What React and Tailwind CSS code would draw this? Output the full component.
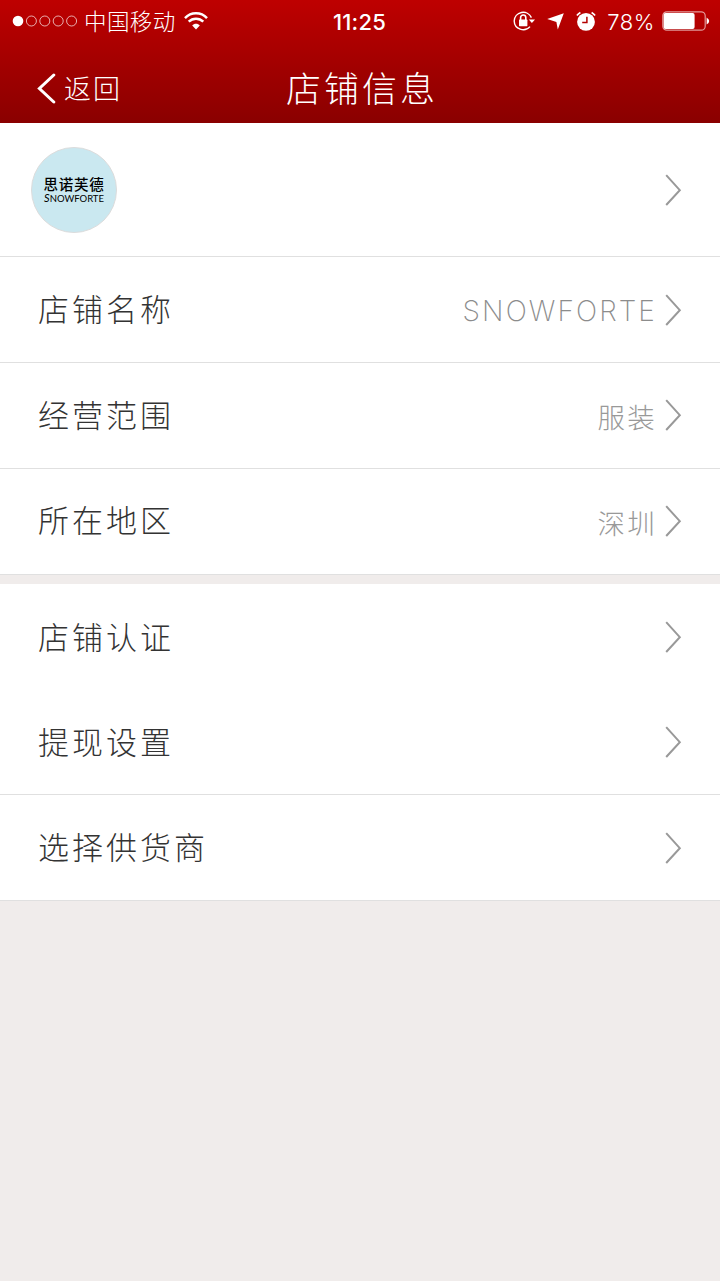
import React from "react";

const cjk = "font-['Noto_Sans_CJK_SC',sans-serif]";

function Chevron() {
  return (
    <svg className="h-[32px] w-[18px] shrink-0" viewBox="0 0 18 32" fill="none" stroke="#999" strokeWidth="2">
      <path d="M1.2 1.2 L14.8 16.2 L1.2 31" />
    </svg>
  );
}

function Row({ label, value, latin, size, labelPad = "pb-[4px]", border }) {
  return (
    <div className={`flex items-center justify-between pr-[37px] pl-[38px] ${size} ${border ? "border-b border-[#e0e0e0]" : ""} bg-white`}>
      <span className={`${labelPad} text-[31px] leading-none font-light tracking-[3px] text-[#333]`}>{label}</span>
      <div className="flex items-center">
        {value && (
          <span
            className={
              latin
                ? "mr-[8px] pt-[3px] font-['Inter','Liberation_Sans',sans-serif] text-[28px] leading-none font-extralight tracking-[2.1px] text-[#8c8c8c]"
                : "mr-[8px] pt-[4px] text-[27.5px] leading-none font-light tracking-[2.2px] text-[#999]"
            }
          >
            {value}
          </span>
        )}
        <Chevron />
      </div>
    </div>
  );
}

function StatusBar() {
  return (
    <div className="grid h-[44px] grid-cols-[1fr_auto_1fr] items-center pr-[10px] pl-[12px]">
      <div className="flex items-center">
        <svg className="mb-[2px] h-[12px] w-[66px]" viewBox="0 0 66 12" fill="none" stroke="#fff" strokeOpacity=".75" strokeWidth="0.9">
          <circle cx="6" cy="6" r="5.3" fill="#fff" stroke="none" />
          <circle cx="19.4" cy="6" r="5" />
          <circle cx="32.8" cy="6" r="5" />
          <circle cx="46.2" cy="6" r="5" />
          <circle cx="59.6" cy="6" r="5" />
        </svg>
        <span className="ml-[6px] pb-[3px] text-[22.5px] leading-none font-light tracking-[0.4px]">中国移动</span>
        <svg className="mb-[3px] ml-[8px] h-[18px] w-[24px]" viewBox="0 0 24 18" fill="none" stroke="#fff" strokeWidth="2.5">
          <path d="M1 6.1 C7 -0.3 17 -0.3 23 6.1" />
          <path d="M4.7 9.7 C8.8 5.6 15.2 5.6 19.3 9.7" />
          <path d="M12 17.6 L8.2 13.5 C10.2 11.3 13.8 11.3 15.8 13.5 Z" fill="#fff" stroke="none" />
        </svg>
      </div>
      <span className="mr-[3px] font-['Inter','Liberation_Sans',sans-serif] text-[22px] leading-none font-medium tracking-[0.2px]">11:25</span>
      <div className="flex items-center justify-end">
        <svg className="mb-[2px] h-[22px] w-[22px]" viewBox="0 0 22 22" fill="none" stroke="#fff" strokeWidth="1.4">
          <path d="M18.4 7.6 A9 9 0 0 0 1.2 11 A9 9 0 0 0 17 16.6" />
          <path d="M15.8 9.5 H22 L18.9 13 Z" fill="#fff" stroke="none" />
          <rect x="6" y="9.6" width="8.4" height="6.6" rx=".6" fill="#fff" stroke="none" />
          <path d="M7.6 10 V7.6 A2.6 2.6 0 0 1 12.8 7.6 V10" strokeWidth="1.6" />
        </svg>
        <svg className="mb-[1px] ml-[12px] h-[17px] w-[17px]" viewBox="0 0 17 17" fill="#fff">
          <path d="M16.8 .3 L10.8 16.6 L9.4 8.9 L.2 6 Z" />
        </svg>
        <svg className="mb-[2px] ml-[12px] h-[20px] w-[20px]" viewBox="0 0 20 20">
          <circle cx="10" cy="10.9" r="8.9" fill="#fff" />
          <path d="M.9 4.4 A11 11 0 0 1 4.4 1.4 M15.6 1.4 A11 11 0 0 1 19.1 4.4" fill="none" stroke="#fff" strokeWidth="1.7" />
          <path d="M10.9 5.8 V11.6 H6.2" fill="none" stroke="#b30000" strokeWidth="1.5" />
        </svg>
        <span className="ml-[11px] font-['Inter','Liberation_Sans',sans-serif] text-[22px] leading-none font-light tracking-[0.6px]">78%</span>
        <svg className="mb-[2px] ml-[7px] h-[20px] w-[48px]" viewBox="0 0 48 20">
          <rect x=".8" y=".8" width="42.4" height="18.4" rx="4" fill="none" stroke="#fff" strokeOpacity=".6" strokeWidth="1.2" />
          <rect x="1.6" y="2" width="31" height="16" rx="2" fill="#fff" />
          <path d="M44.6 6.5 Q47.2 8 47.2 10 T44.6 13.5 Z" fill="#fff" />
        </svg>
      </div>
    </div>
  );
}

export default function App() {
  return (
    <div className={`flex h-[1281px] w-[720px] flex-col bg-[#f0eceb] ${cjk}`}>
      <header className="flex h-[123px] flex-col bg-gradient-to-b from-[#be0000] to-[#8a0000] text-white">
        <StatusBar />
        <div className="grid h-[79px] grid-cols-[1fr_auto_1fr] items-center pb-[1px] pl-[37px]">
          <div className="flex items-center pt-[10px]">
            <svg className="h-[31px] w-[19px]" viewBox="0 0 19 31" fill="none" stroke="#fff" strokeWidth="3" strokeLinecap="round">
              <path d="M16.8 2 L2.4 15.5 L16.8 29" />
            </svg>
            <span className="ml-[8px] pb-[2px] text-[27px] leading-none font-light tracking-[2px]">返回</span>
          </div>
          <h1 className="mr-[33px] pt-[7px] text-[35px] leading-none font-light tracking-[3px]">店铺信息</h1>
        </div>
      </header>

      <section className="flex flex-col">
        <div className="flex h-[134px] items-center justify-between border-b border-[#e0e0e0] bg-white pr-[37px] pl-[31px]">
          <div className="flex h-[86px] w-[86px] flex-col items-center justify-center rounded-full border border-[#dcdcdc] bg-[#cae8f0] text-black">
            <span className="text-[14.5px] leading-[15px] font-medium tracking-[0.8px] whitespace-nowrap">思诺芙德</span>
            <span className="mt-[2px] flex items-baseline font-['Lato',sans-serif] text-[9.5px] leading-[10px] whitespace-nowrap">
              <span className="text-[11px] leading-[10px] italic">S</span>NOWFORTE
            </span>
          </div>
          <Chevron />
        </div>
        <Row label="店铺名称" value="SNOWFORTE" latin size="h-[106px]" border />
        <Row label="经营范围" value="服装" size="h-[106px] pb-[2px]" labelPad="pb-[2px]" border />
        <Row label="所在地区" value="深圳" size="h-[106px] pb-[2px]" border />
      </section>

      <section className="mt-[9px] flex flex-col">
        <Row label="店铺认证" size="h-[105px]" labelPad="pb-[2px]" />
        <Row label="提现设置" size="h-[106px]" labelPad="pb-[2px]" border />
        <Row label="选择供货商" size="h-[106px]" border />
      </section>
    </div>
  );
}
